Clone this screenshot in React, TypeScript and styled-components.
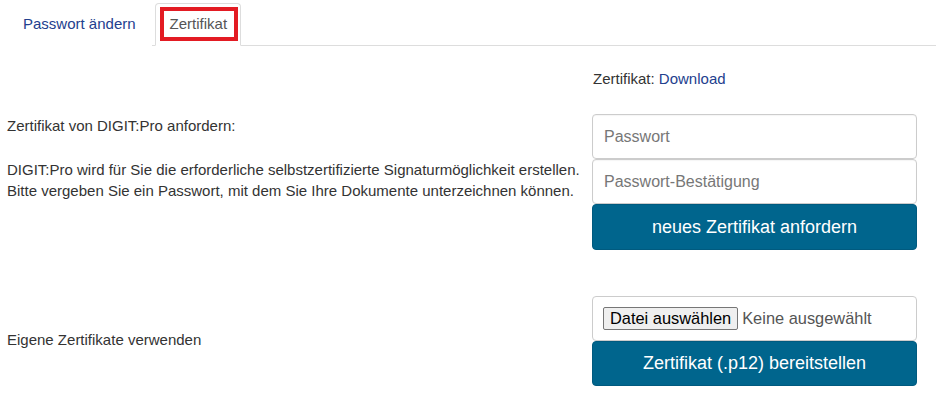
import React from "react";
import styled, { createGlobalStyle } from "styled-components";

const GlobalStyle = createGlobalStyle`
  html, body {
    margin: 0;
    padding: 0;
    background: #fff;
  }
  body {
    font-family: "Liberation Sans", Arial, sans-serif;
    font-size: 15px;
    color: #333;
  }
`;

const Page = styled.div`
  padding-left: 7px;
`;

const Tabs = styled.ul`
  list-style: none;
  margin: 3px 0 0;
  padding: 0;
  display: flex;
  border-bottom: 1px solid #ddd;
`;

const Tab = styled.li<{ $active?: boolean }>`
  margin-bottom: -1px;
  margin-right: 3px;
  border: 1px solid ${({ $active }) => ($active ? "#ddd" : "transparent")};
  border-bottom-color: ${({ $active }) => ($active ? "#fff" : "transparent")};
  border-radius: 4px 4px 0 0;
  background: #fff;
  padding: ${({ $active }) => ($active ? "3px 2px 4px 4px" : "10px 15px")};
  line-height: 20px;
  color: #23408e;
  cursor: pointer;
`;

const Highlight = styled.span`
  display: block;
  border: 4px solid #e31b23;
  padding: 3px 7px 3px 6px;
  color: #555;
`;

const Content = styled.div`
  width: 910px;
  padding-top: 22px;
  display: flex;
  flex-direction: column;
  gap: 46px;
`;

const Section = styled.div`
  display: grid;
  grid-template-columns: 585px 325px;
  align-items: center;
`;

const Info = styled.div`
  line-height: 22px;
  padding-bottom: 2px;

  p {
    margin: 0;
  }
`;

const Lead = styled.p`
  font-size: 15px;
  line-height: 21px;
`;

const Side = styled.div`
  display: flex;
  flex-direction: column;
`;

const CertLine = styled.div`
  line-height: 22px;
  padding-left: 1px;
  margin-bottom: 24px;

  a {
    color: #23408e;
    text-decoration: none;
  }
`;

const Input = styled.input`
  box-sizing: border-box;
  height: 45px;
  margin: 0;
  padding: 10px 11px;
  font: 16px "Liberation Sans", Arial, sans-serif;
  color: #555;
  border: 1px solid #ccc;
  border-radius: 4px;
  box-shadow: inset 0 1px 1px rgba(0, 0, 0, 0.04);

  &::placeholder {
    color: #777;
  }
`;

const FileBox = styled.div`
  box-sizing: border-box;
  height: 45px;
  border: 1px solid #ccc;
  border-radius: 4px;
  display: flex;
  align-items: center;
  padding: 0 10px;
  gap: 4px;
  font-size: 16.4px;
  color: #555;
`;

const FileButton = styled.span`
  box-sizing: border-box;
  height: 23px;
  line-height: 21px;
  padding: 0 6px;
  background: #efefef;
  border: 1px solid #767676;
  border-radius: 2px;
  color: #000;
`;

const Submit = styled.button<{ $h: number }>`
  height: ${({ $h }) => $h}px;
  border: 1px solid #005a7f;
  border-radius: 4px;
  background: #00658d;
  color: #fff;
  font: 18px "Liberation Sans", Arial, sans-serif;
  cursor: pointer;
`;

export default function App() {
  return (
    <>
      <GlobalStyle />
      <Page>
        <Tabs>
          <Tab>Passwort ändern</Tab>
          <Tab $active>
            <Highlight>Zertifikat</Highlight>
          </Tab>
        </Tabs>
        <Content>
          <Section>
            <Info>
              <p>Zertifikat von DIGIT:Pro anfordern:</p>
              <br />
              <Lead>
                DIGIT:Pro wird für Sie die erforderliche selbstzertifizierte
                Signaturmöglichkeit erstellen.
                <br />
                Bitte vergeben Sie ein Passwort, mit dem Sie Ihre Dokumente
                unterzeichnen können.
              </Lead>
            </Info>
            <Side>
              <CertLine>
                Zertifikat: <a href="#">Download</a>
              </CertLine>
              <Input type="password" placeholder="Passwort" />
              <Input type="password" placeholder="Passwort-Bestätigung" />
              <Submit $h={46}>neues Zertifikat anfordern</Submit>
            </Side>
          </Section>
          <Section>
            <Info>
              <p>Eigene Zertifikate verwenden</p>
            </Info>
            <Side>
              <FileBox>
                <FileButton>Datei auswählen</FileButton>
                <span>Keine ausgewählt</span>
              </FileBox>
              <Submit $h={45}>Zertifikat (.p12) bereitstellen</Submit>
            </Side>
          </Section>
        </Content>
      </Page>
    </>
  );
}
